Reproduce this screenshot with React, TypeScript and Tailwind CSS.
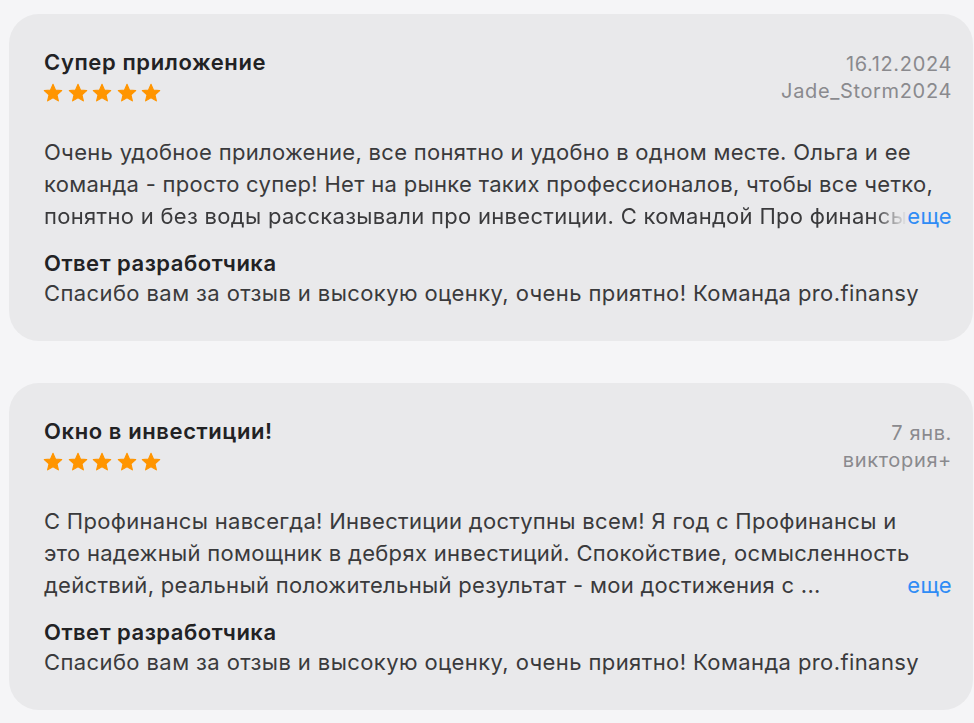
import React from "react";

const Star = () => (
  <svg width="22" height="22" viewBox="0 0 24 24" className="block">
    <path
      d="M12 2.5L14.7 8.78L21.51 9.41L16.37 13.92L17.88 20.59L12 17.1L6.12 20.59L7.63 13.92L2.49 9.41L9.3 8.78Z"
      fill="#ff9500"
      stroke="#ff9500"
      strokeWidth="1.2"
      strokeLinejoin="round"
    />
  </svg>
);

const Stars = () => (
  <div className="flex gap-[2.5px] h-[22px] mt-[6px] -ml-[2px]">
    <Star />
    <Star />
    <Star />
    <Star />
    <Star />
  </div>
);

type Review = {
  title: string;
  date: string;
  author: string;
  lines: [string, string];
  last: string;
  fade: boolean;
};

const reviews: Review[] = [
  {
    title: "Супер приложение",
    date: "16.12.2024",
    author: "Jade_Storm2024",
    lines: [
      "Очень удобное приложение, все понятно и удобно в одном месте. Ольга и ее",
      "команда - просто супер! Нет на рынке таких профессионалов, чтобы все четко,",
    ],
    last: "понятно и без воды рассказывали про инвестиции. С командой Про финансы",
    fade: true,
  },
  {
    title: "Окно в инвестиции!",
    date: "7 янв.",
    author: "виктория+",
    lines: [
      "С Профинансы навсегда! Инвестиции доступны всем! Я год с Профинансы и",
      "это надежный помощник в дебрях инвестиций. Спокойствие, осмысленность",
    ],
    last: "действий, реальный положительный результат - мои достижения с ...",
    fade: false,
  },
];

const Card = ({ r }: { r: Review }) => (
  <div className="bg-[#e9e9eb] rounded-[30px] pl-[35px] pr-[21px] pt-[34px] pb-[33px]">
    <div className="flex justify-between">
      <div>
        <div className="text-[22px] leading-[28px] font-semibold text-[#222224] tracking-[0.6px]">
          {r.title}
        </div>
        <Stars />
      </div>
      <div className="text-right text-[20px] leading-[27px] text-[#8a8a8e] tracking-[0.65px] pt-[3px]">
        <div>{r.date}</div>
        <div>{r.author}</div>
      </div>
    </div>
    <div className="mt-[31px] text-[22px] leading-[32px] text-[#3a3a3c] tracking-[0.3px]">
      <div className="whitespace-nowrap">{r.lines[0]}</div>
      <div className="whitespace-nowrap">{r.lines[1]}</div>
      <div className="flex items-baseline">
        {r.fade ? (
          <div className="flex-1 min-w-0 overflow-hidden whitespace-nowrap [mask-image:linear-gradient(to_right,black_calc(100%-34px),transparent)]">
            {r.last}
          </div>
        ) : (
          <div className="flex-1 min-w-0 whitespace-nowrap">{r.last}</div>
        )}
        <span className="text-[#2f8cf5]">еще</span>
      </div>
    </div>
    <div className="mt-[16px] text-[22px] leading-[30px] text-[#3a3a3c] tracking-[0.4px]">
      <div className="font-semibold text-[#222224] tracking-[0.5px]">Ответ разработчика</div>
      <div className="whitespace-nowrap">
        Спасибо вам за отзыв и высокую оценку, очень приятно! Команда pro.finansy
      </div>
    </div>
  </div>
);

export default function App() {
  return (
    <div
      className="w-[974px] h-[723px] bg-[#f5f5f7] pt-[14px] pl-[9px] pr-[1px] flex flex-col gap-[42px] overflow-hidden"
      style={{ fontFamily: "Inter, 'Noto Sans', sans-serif" }}
    >
      {reviews.map((r) => (
        <Card key={r.title} r={r} />
      ))}
    </div>
  );
}
